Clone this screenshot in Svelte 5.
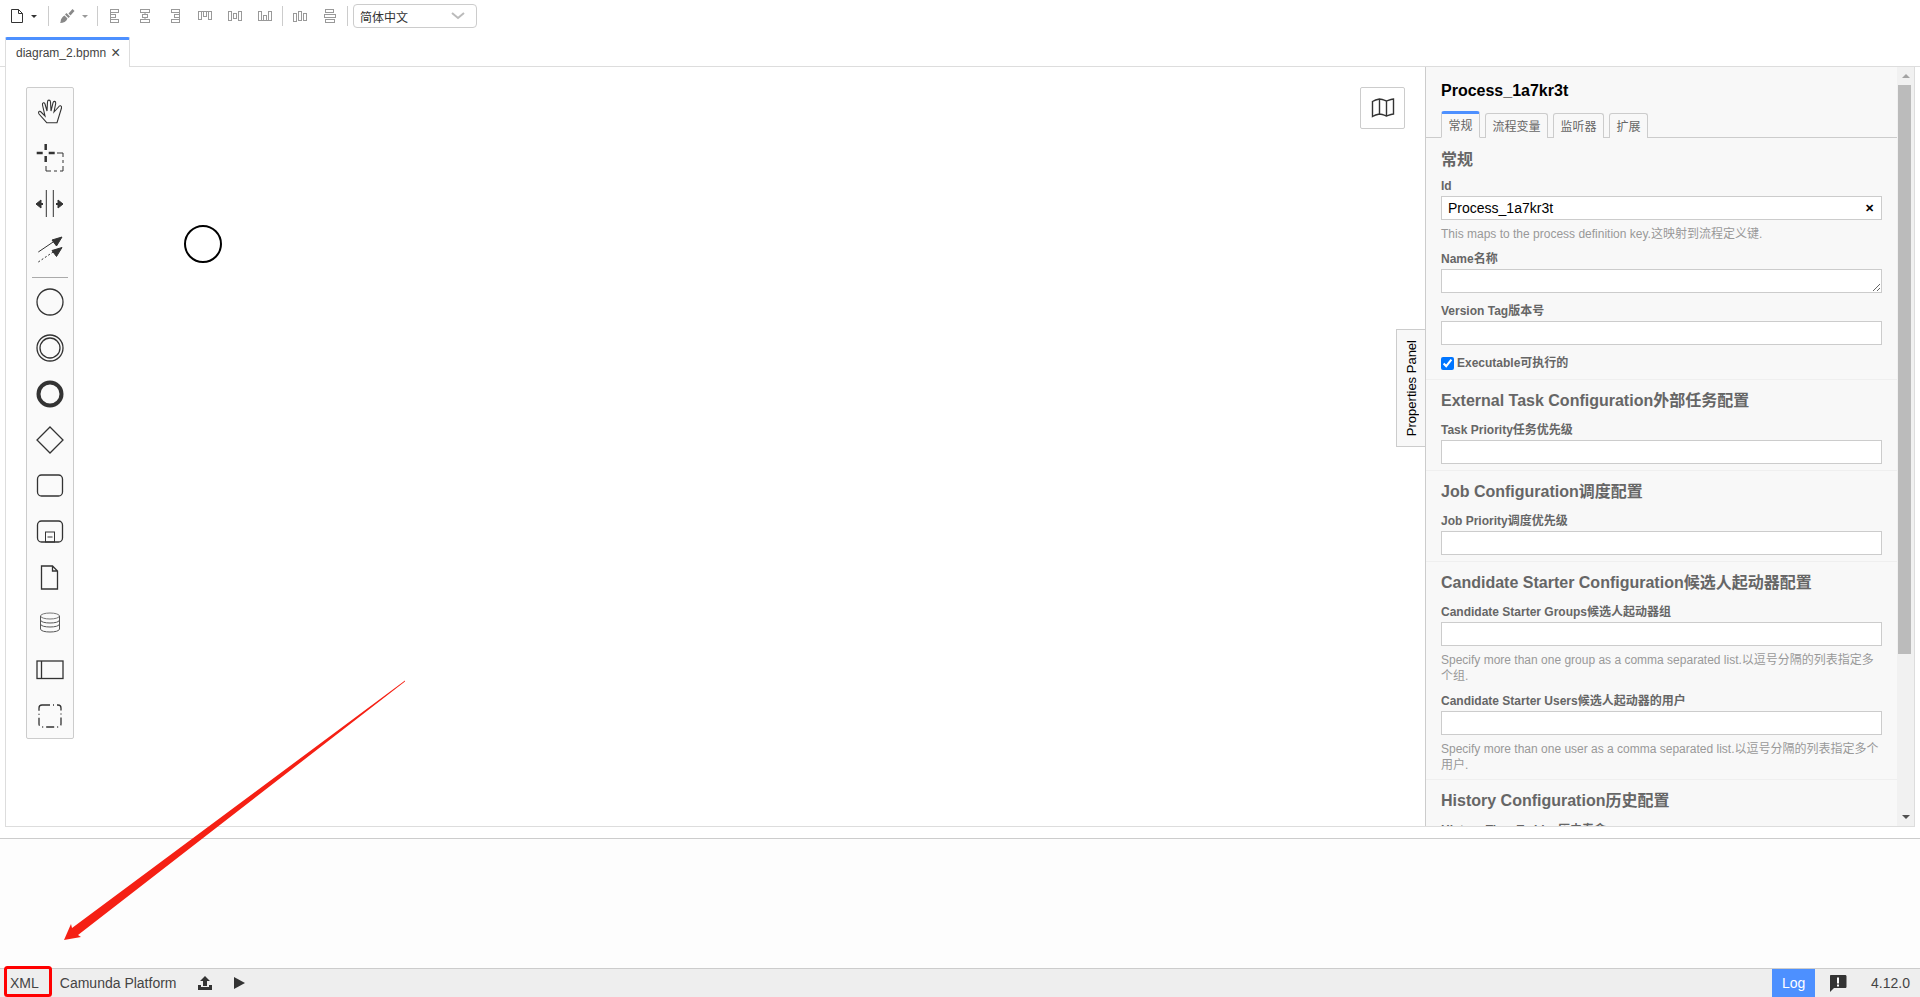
<script>
  const alignIcons = [
    { line: 'M3.5 1v14', rects: [[3.5, 1.5, 8, 3], [3.5, 6.5, 5, 3], [3.5, 11.5, 8, 3]] },
    { line: 'M8 1v1M8 4v3M8 9v3M8 14v1', rects: [[3.5, 1.5, 9, 3], [5.5, 6.5, 5, 3], [3.5, 11.5, 9, 3]] },
    { line: 'M12.5 1v14', rects: [[4.5, 1.5, 8, 3], [7.5, 6.5, 5, 3], [4.5, 11.5, 8, 3]] },
    { line: 'M1 3.5h14', rects: [[1.5, 3.5, 3, 8], [6.5, 3.5, 3, 5], [11.5, 3.5, 3, 8]] },
    { line: '', rects: [[1.5, 3.5, 3, 9], [6.5, 5.5, 3, 5], [11.5, 3.5, 3, 9]] },
    { line: 'M1 12.5h14', rects: [[1.5, 3.5, 3, 9], [6.5, 7.5, 3, 5], [11.5, 3.5, 3, 9]] }
  ];
  const distIcons = [
    { rects: [[1.5, 5.5, 3, 8], [6.5, 3.5, 3, 9], [11.5, 5.5, 3, 7]] },
    { rects: [[3.5, 1.5, 8, 3], [2.5, 6.5, 11, 3], [3.5, 11.5, 9, 3]] }
  ];

  const groups = [
    {
      title: '常规',
      first: true,
      entries: [
        { label: 'Id', value: 'Process_1a7kr3t', clear: true, hint: 'This maps to the process definition key.这映射到流程定义键.' },
        { label: 'Name名称', area: true },
        { label: 'Version Tag版本号' },
        { check: 'Executable可执行的' }
      ]
    },
    { title: 'External Task Configuration外部任务配置', entries: [{ label: 'Task Priority任务优先级' }] },
    { title: 'Job Configuration调度配置', entries: [{ label: 'Job Priority调度优先级' }] },
    {
      title: 'Candidate Starter Configuration候选人起动器配置',
      entries: [
        { label: 'Candidate Starter Groups候选人起动器组', hint: 'Specify more than one group as a comma separated list.以逗号分隔的列表指定多个组.' },
        { label: 'Candidate Starter Users候选人起动器的用户', hint: 'Specify more than one user as a comma separated list.以逗号分隔的列表指定多个用户.' }
      ]
    },
    { title: 'History Configuration历史配置', entries: [{ label: 'History Time To Live历史寿命' }] }
  ];
</script>

<div class="page">
  <div class="toolbar">
    <div class="tool file">
      <svg width="14" height="16" viewBox="0 0 14 16"><path d="M1.5 1.5h7l4 4v9h-11zM8.500 1.500v4h4" fill="none" stroke="#333" /></svg>
      <i class="caret dark"></i>
    </div>
    <span class="sep"></span>
    <div class="tool brush">
      <svg width="16" height="16" viewBox="0 0 16 16"><path d="M9.500 5.500l4-4.500 2 2-4 4.500zM7.500 5l3.500 3.500-1.500 1.500-3.500-3.500zM5.500 7.500l3 3c-1 3-4 4.500-7.500 4.500 1-1 .5-2 1-3.500.5-1.500 2-3 3.500-4z" fill="#888" /></svg>
      <i class="caret"></i>
    </div>
    <span class="sep"></span>
    <div class="aligns">
      {#each alignIcons as icon}
        <svg width="16" height="16" viewBox="0 0 16 16">
          {#if icon.line}<path d={icon.line} fill="none" stroke="#999" />{/if}
          {#each icon.rects as r}<rect x={r[0]} y={r[1]} width={r[2]} height={r[3]} fill="none" stroke="#999" />{/each}
        </svg>
      {/each}
    </div>
    <span class="sep"></span>
    <div class="aligns two">
      {#each distIcons as icon}
        <svg width="16" height="16" viewBox="0 0 16 16">
          {#each icon.rects as r}<rect x={r[0]} y={r[1]} width={r[2]} height={r[3]} fill="none" stroke="#999" />{/each}
        </svg>
      {/each}
    </div>
    <span class="sep"></span>
    <div class="select">
      <span>简体中文</span>
      <svg width="14" height="8" viewBox="0 0 14 8"><path d="M1 1l6 5 6-5" fill="none" stroke="#bbb" stroke-width="2" /></svg>
    </div>
  </div>

  <div class="tabs">
    <div class="tab"><span>diagram_2.bpmn</span><b>×</b></div>
  </div>

  <div class="workspace">
    <div class="canvas">
      <div class="palette">
        <svg width="46" height="650" viewBox="0 0 46 650">
          <g fill="none" stroke="#333" stroke-width="1" transform="translate(-1 0)">
            <!-- hand -->
            <path d="M20.700 34.700L13 26c-1-1.500 0-3.500 1.500-2.500L19 28l-2.500-11c-.5-2.500 2-3 2.500-1l2 7 .5-9c.1-2.500 2.800-2.500 3 0l.5 9 2-8c.5-2.500 3-2 2.700.5L28 24l4.500-5c1-2 3.500-1.500 3 1L31 34.700z" stroke-width="1.100" />
            <!-- lasso -->
            <path d="M10.700 65h6M22.700 65h6M19.700 56v6M19.700 68v6" stroke-width="2.500" />
            <path d="M31 65h6v4M37 72v3M37 78v5h-3M31 83h-3M25 83h-5v-5" stroke-width="1" />
            <!-- space -->
            <path d="M20.300 102v27M27.300 102v27" />
            <path d="M10 116l5-4v8zM37 116l-5-4v8z" fill="#333" />
            <path d="M14 116h3M30 116h3" stroke-width="2" />
            <!-- connect -->
            <path d="M12.300 164l20-13.500" />
            <path d="M12.300 174l20-13.500" stroke-dasharray="2 2" />
            <path d="M36 149l-10 3 4.500 6zM36 159.500l-10 3 4.500 6z" fill="#333" />
            <!-- events -->
            <circle cx="24" cy="214" r="13" stroke-width="1.300" />
            <circle cx="24" cy="260" r="13" stroke-width="1.300" />
            <circle cx="24" cy="260" r="10" stroke-width="1.300" />
            <circle cx="24" cy="306" r="11.500" stroke-width="4" />
            <!-- gateway -->
            <path d="M24 339l13 13-13 13-13-13z" stroke-width="1.300" />
            <!-- task -->
            <rect x="11.500" y="387" width="25" height="21" rx="4" stroke-width="1.300" />
            <!-- subprocess -->
            <rect x="11.500" y="433" width="25" height="21" rx="4" stroke-width="1.300" />
            <rect x="19.500" y="444" width="9" height="10" />
            <path d="M21.500 449h5" />
            <!-- data object -->
            <path d="M15.500 478h11l5 5v18h-16zM26.500 478v5h5" stroke-width="1.300" />
            <!-- data store -->
            <ellipse cx="24" cy="528" rx="9.500" ry="3" stroke="#777" />
            <path d="M14.500 528v13c0 4 19 4 19 0v-13M14.500 532c0 4 19 4 19 0M14.500 536c0 4 19 4 19 0" stroke="#555" />
            <!-- pool -->
            <rect x="11" y="573" width="26" height="17.500" stroke-width="1.300" />
            <path d="M15.500 573v17.500" stroke-width="1.300" />
            <!-- group -->
            <rect x="13" y="617" width="22" height="22" rx="3" stroke-width="1.300" stroke-dasharray="8 3 1 3" />
          </g>
        </svg>
        <span class="palette-sep"></span>
      </div>

      <svg class="start" width="40" height="40" viewBox="0 0 40 40"><circle cx="20" cy="20" r="18" fill="#fff" stroke="#000" stroke-width="2" /></svg>

      <button class="minimap" aria-label="Toggle minimap">
        <svg width="24" height="22" viewBox="0 0 24 22"><path d="M1.500 4.500c2.500-1.500 4.500-2 7-2.500 2 0 4.500 1 7 2 2.500-1 4.500-2 7-2v15c-2.500 0-4.500 1-7 2-2.500-1-5-2-7-2-2.500.5-4.500 1-7 2.500zM8.500 2v15M15.500 4v15" fill="none" stroke="#333" stroke-width="1.400" /></svg>
      </button>

      <div class="panel-toggle"><span>Properties Panel</span></div>
    </div>

    <div class="panel">
      <div class="panel-body">
        <div class="title">Process_1a7kr3t</div>
        <div class="ptabs">
          <span class="ptab active">常规</span>
          <span class="ptab">流程变量</span>
          <span class="ptab">监听器</span>
          <span class="ptab">扩展</span>
        </div>
        {#each groups as group}
          <section class="group" class:first={group.first}>
            <h3>{group.title}</h3>
            {#each group.entries as entry}
              <div class="entry">
                {#if entry.check}
                  <label class="check"><input type="checkbox" checked />{entry.check}</label>
                {:else}
                  <label class="label">{entry.label}</label>
                  <div class="field" class:area={entry.area}>
                    {#if entry.area}
                      <textarea rows="1"></textarea>
                    {:else}
                      <input type="text" value={entry.value ?? ''} />
                    {/if}
                    {#if entry.clear}<span class="clear">✕</span>{/if}
                  </div>
                  {#if entry.hint}<div class="hint">{entry.hint}</div>{/if}
                {/if}
              </div>
            {/each}
          </section>
        {/each}
      </div>
      <div class="scrollbar">
        <i class="up"></i>
        <div class="track"><div class="thumb"></div></div>
        <i class="down"></i>
      </div>
    </div>
  </div>

  <div class="log"></div>

  <div class="status">
    <span class="xml">XML</span>
    <span class="platform">Camunda Platform</span>
    <svg class="upload" width="16" height="16" viewBox="0 0 16 16"><path d="M8 1l5 5h-3v5H6V6H3z" fill="#333" /><path d="M1 10h3v2h8v-2h3v5H1z" fill="#333" /></svg>
    <svg class="play" width="14" height="14" viewBox="0 0 14 14"><path d="M2 1l11 6-11 6z" fill="#333" /></svg>
    <span class="spacer"></span>
    <span class="log-btn">Log</span>
    <svg class="feedback" width="18" height="18" viewBox="0 0 18 18"><path d="M2 1h14c1 0 1.500.5 1.500 1.500v10c0 1-.5 1.500-1.500 1.500H5l-4 4V2.500C1 1.500 1 1 2 1z" fill="#333" /><path d="M8 3.500h2v6H8zM8 10.500h2v2H8z" fill="#fff" /></svg>
    <span class="version">4.12.0</span>
  </div>

  <svg class="note" width="1920" height="997" viewBox="0 0 1920 997">
    <path d="M405 681.500L78 935l3 2-17 3 7-16 1 4L405 680.500z" fill="#f52014" />
    <rect x="5.500" y="967.500" width="45" height="28" rx="2" fill="none" stroke="#f00" stroke-width="3" />
  </svg>
</div>

<style>
  :global(body) {
    margin: 0;
    background: #fff;
  }

  .page {
    position: relative;
    width: 1920px;
    height: 997px;
    display: flex;
    flex-direction: column;
    overflow: hidden;
    font-family: "Liberation Sans", "Noto Sans CJK SC", sans-serif;
    color: #333;
  }

  .toolbar {
    height: 37px;
    flex: none;
    display: flex;
    align-items: flex-start;
    padding-top: 6px;
    box-sizing: border-box;
  }

  .tool {
    display: flex;
    align-items: center;
    height: 20px;
  }

  .file,
  .brush {
    width: 48px;
    padding-left: 10px;
    box-sizing: border-box;
    gap: 7px;
  }

  .caret {
    width: 0;
    height: 0;
    border-left: 3px solid transparent;
    border-right: 3px solid transparent;
    border-top: 3px solid #999;
  }

  .caret.dark {
    border-top-color: #333;
  }

  .sep {
    width: 1px;
    height: 20px;
    background: #ccc;
  }

  .aligns {
    display: flex;
    align-items: center;
    height: 20px;
    width: 184px;
    padding-left: 9px;
    box-sizing: border-box;
    gap: 14px;
  }

  .aligns.two {
    width: 64px;
    padding-left: 9px;
  }

  .select {
    margin-left: 5px;
    margin-top: -2px;
    width: 124px;
    height: 24px;
    box-sizing: border-box;
    border: 1px solid #ccc;
    border-radius: 4px;
    display: flex;
    align-items: center;
    justify-content: space-between;
    padding: 0 11px 0 6px;
    font-size: 12px;
  }

  .tabs {
    height: 30px;
    flex: none;
    box-sizing: border-box;
    padding-left: 5px;
    border-bottom: 1px solid #ddd;
  }

  .tab {
    width: 125px;
    height: 30px;
    box-sizing: border-box;
    background: #fff;
    border-top: 3px solid #4d90ff;
    border-left: 1px solid #ddd;
    border-right: 1px solid #ddd;
    border-radius: 2px 2px 0 0;
    display: flex;
    align-items: center;
    gap: 5px;
    padding: 0 0 2px 10px;
    font-size: 12px;
    color: #444;
  }

  .tab b {
    font-size: 16px;
    font-weight: normal;
    line-height: 1;
  }

  .workspace {
    height: 760px;
    flex: none;
    display: flex;
    box-sizing: border-box;
    margin: 0 5px;
    border: 1px solid #ddd;
    border-top: none;
  }

  .canvas {
    flex: 1;
    position: relative;
    background: #fff;
  }

  .palette {
    position: absolute;
    left: 20px;
    top: 20px;
    width: 48px;
    height: 652px;
    box-sizing: border-box;
    background: #fafafa;
    border: 1px solid #ccc;
    border-radius: 2px;
  }

  .palette svg {
    display: block;
  }

  .palette-sep {
    position: absolute;
    left: 5px;
    right: 5px;
    top: 189px;
    height: 1px;
    background: #aaa;
  }

  .start {
    position: absolute;
    left: 177px;
    top: 157px;
  }

  .minimap {
    position: absolute;
    right: 20px;
    top: 20px;
    width: 45px;
    height: 42px;
    padding: 0;
    box-sizing: border-box;
    background: #fff;
    border: 1px solid #ccc;
    border-radius: 2px;
    display: flex;
    align-items: center;
    justify-content: center;
  }

  .panel-toggle {
    position: absolute;
    right: 0;
    top: 262px;
    width: 29px;
    height: 118px;
    box-sizing: border-box;
    background: #f8f8f8;
    border: 1px solid #ccc;
    border-right: none;
    padding-left: 1px;
    display: flex;
    align-items: center;
    justify-content: center;
  }

  .panel-toggle span {
    writing-mode: vertical-rl;
    transform: rotate(180deg);
    font-size: 13px;
    white-space: nowrap;
    color: #000;
  }

  .panel {
    width: 488px;
    flex: none;
    display: flex;
    background: #f8f8f8;
    border-left: 1px solid #ccc;
  }

  .panel-body {
    flex: 1;
    min-width: 0;
    overflow: hidden;
  }

  .title {
    font-size: 16px;
    font-weight: bold;
    line-height: 20px;
    color: #000;
    padding: 14px 15px 0;
  }

  .ptabs {
    margin-top: 9px;
    height: 28px;
    box-sizing: border-box;
    padding-left: 15px;
    display: flex;
    gap: 5px;
    align-items: flex-end;
    border-bottom: 1px solid #ccc;
  }

  .ptab {
    height: 25px;
    box-sizing: border-box;
    margin-bottom: -1px;
    padding: 0 6.5px 2px;
    display: flex;
    align-items: center;
    font-size: 12px;
    color: #666;
    background: #f8f8f8;
    border: 1px solid #ccc;
    border-bottom: none;
    border-radius: 3px 3px 0 0;
  }

  .ptab.active {
    height: 27px;
    border-top: 3px solid #4d90ff;
    border-bottom: 1px solid #f8f8f8;
  }

  .group {
    padding: 11px 15px 6px;
    border-bottom: 1px solid #efefef;
  }

  .group.first {
    padding-top: 12px;
    padding-bottom: 8px;
  }

  h3 {
    margin: 0;
    padding-bottom: 2px;
    font-size: 16px;
    line-height: 20px;
    font-weight: bold;
    color: #666;
  }

  .first h3 {
    padding-bottom: 0;
    margin-bottom: -1px;
  }

  .entry {
    margin-top: 10px;
  }

  .label {
    display: block;
    font-size: 12px;
    line-height: 14px;
    font-weight: bold;
    color: #666;
    margin-bottom: 3px;
  }

  .field {
    position: relative;
    height: 24px;
  }

  .field.area {
    margin-bottom: 11px;
  }

  .field input,
  .field textarea {
    display: block;
    width: 100%;
    height: 24px;
    margin: 0;
    box-sizing: border-box;
    border: 1px solid #ccc;
    background: #fff;
    padding: 0 6px;
    font: 14px "Liberation Sans", "Noto Sans CJK SC", sans-serif;
    color: #000;
    border-radius: 0;
  }

  .clear {
    position: absolute;
    right: 8px;
    top: 5px;
    font-size: 11px;
    line-height: 14px;
    font-weight: bold;
    color: #000;
  }

  .hint {
    margin-top: 6px;
    font-size: 12px;
    line-height: 16px;
    color: #999;
  }

  .check {
    display: flex;
    align-items: center;
    font-size: 12px;
    line-height: 16px;
    font-weight: bold;
    color: #666;
  }

  .check input {
    width: 13px;
    height: 13px;
    margin: 0 3px 0 0;
    accent-color: #0075ff;
  }

  .scrollbar {
    width: 17px;
    flex: none;
    display: flex;
    flex-direction: column;
    align-items: center;
    background: #f1f1f1;
  }

  .scrollbar i {
    flex: none;
    width: 0;
    height: 0;
    margin: 7px 0;
    border-left: 4px solid transparent;
    border-right: 4px solid transparent;
  }

  .up {
    border-bottom: 4px solid #a3a3a3;
  }

  .down {
    border-top: 4px solid #505050;
  }

  .track {
    flex: 1;
    width: 100%;
  }

  .thumb {
    width: 13px;
    margin-left: 1px;
    height: 569px;
    background: #bbb;
  }

  .log {
    flex: 1;
    margin-top: 11px;
    background: #fdfdfd;
    border-top: 1px solid #ccc;
  }

  .status {
    height: 29px;
    flex: none;
    box-sizing: border-box;
    display: flex;
    align-items: center;
    background: #eee;
    border-top: 1px solid #ccc;
    font-size: 14px;
    color: #444;
  }

  .xml {
    margin-left: 10px;
  }

  .platform {
    margin-left: 21px;
  }

  .upload {
    margin-left: 20px;
  }

  .play {
    margin-left: 19px;
  }

  .spacer {
    flex: 1;
  }

  .log-btn {
    width: 43px;
    align-self: stretch;
    display: flex;
    align-items: center;
    justify-content: center;
    background: #4d90ff;
    color: #fff;
  }

  .feedback {
    margin-left: 14px;
  }

  .version {
    margin-left: 24px;
    margin-right: 10px;
  }

  .note {
    position: absolute;
    left: 0;
    top: 0;
    pointer-events: none;
  }
</style>
